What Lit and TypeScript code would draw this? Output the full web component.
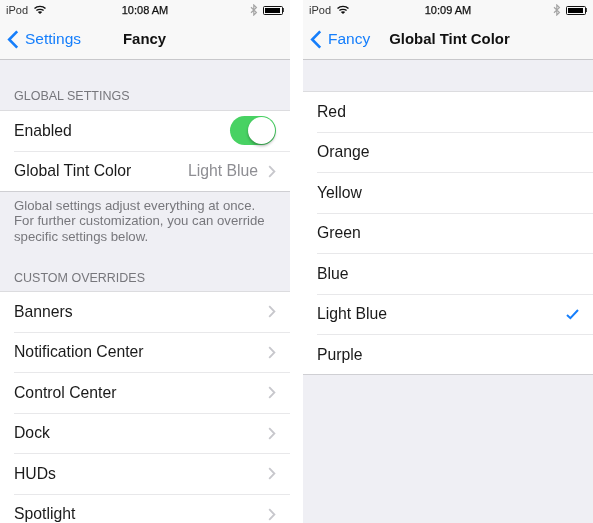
import { LitElement, html, css, svg } from "lit";
import { customElement } from "lit/decorators.js";

const chevron = html`<svg class="chev" width="8" height="13" viewBox="0 0 8 13"><path d="M1.2 1.2 L6.4 6.5 L1.2 11.8" fill="none" stroke="#c7c7cc" stroke-width="1.8"/></svg>`;
const wifi = svg`<path d="M0.5 3.6 C3.4 0.6 8.6 0.6 11.5 3.6 M2.4 5.6 C4.2 3.9 7.8 3.9 9.6 5.6" fill="none" stroke="#111" stroke-width="1.4"/><path d="M6 9 L3.8 6.9 C5 5.9 7 5.9 8.2 6.9 Z" fill="#111"/>`;

function statusBar(time: string) {
  return html`<div class="status">
    <div class="st-left">iPod<svg width="12" height="9" viewBox="0 0 12 9">${wifi}</svg></div>
    <div class="st-time">${time}</div>
    <div class="st-right">
      <svg width="8" height="12" viewBox="0 0 8 12"><path d="M1 3.2 L6.4 8.4 L3.8 11 V1 L6.4 3.6 L1 8.8" fill="none" stroke="#a4a4a4" stroke-width="1.2"/></svg>
      <div class="batt"><div class="batt-fill"></div></div><div class="batt-tip"></div>
    </div>
  </div>`;
}

function navBar(back: string, title: string, cls: string) {
  return html`<div class="nav ${cls}">
    <div class="back">
      <svg width="12" height="19" viewBox="0 0 12 19"><path d="M10.2 1.4 L2.2 9.5 L10.2 17.6" fill="none" stroke="#157efb" stroke-width="2.6"/></svg>
      <span>${back}</span>
    </div>
    <div class="title">${title}</div>
  </div>`;
}

@customElement("app-root")
export class AppRoot extends LitElement {
  static styles = css`
    :host {
      display: flex;
      gap: 13px;
      width: 593px;
      height: 523px;
      overflow: hidden;
      background: #fff;
      font-family: "Liberation Sans", Arial, sans-serif;
      color: #111;
    }
    .panel {
      width: 290px;
      height: 523px;
      flex: none;
      background: #efeff4;
      display: flex;
      flex-direction: column;
      overflow: hidden;
      filter: blur(0.35px);
    }
    .head {
      flex: none;
      height: 59px;
      background: #f8f8f8;
      border-bottom: 1px solid #c8c8cb;
    }
    .status {
      height: 19px;
      display: grid;
      grid-template-columns: 1fr auto 1fr;
      align-items: center;
      padding: 0 6px 0 6px;
      font-size: 11px;
      color: #333;
    }
    .st-left { display: flex; align-items: center; gap: 6px; }
    .st-time { -webkit-text-stroke: 0.25px #111; color: #111; }
    .st-right { display: flex; align-items: center; justify-content: flex-end; }
    .st-right svg { margin-right: 5px; }
    .batt {
      width: 20px;
      height: 9px;
      margin-top: 1px;
      box-sizing: border-box;
      border: 1px solid #111;
      border-radius: 1.5px;
      padding: 1px;
    }
    .batt-fill { width: 15px; height: 100%; background: #000; }
    .batt-tip { width: 1.5px; height: 4px; margin-top: 1px; background: #444; }
    .nav {
      height: 40px;
      display: flex;
      align-items: center;
    }
    .back {
      display: flex;
      align-items: center;
      gap: 6px;
      padding-left: 7px;
      color: #157efb;
      font-size: 15.5px;
    }
    .title {
      font-size: 14.9px;
      font-weight: 700;
      color: #111;
    }
    .nav-left .title { margin-left: 42px; }
    .nav-right .title { margin-left: 19px; }
    .sect {
      font-size: 12.5px;
      color: #77777c;
      padding: 0 14px;
      line-height: 14px;
    }
    .g1 { margin-top: 29px; margin-bottom: 7px; }
    .g2 { margin-top: 27px; margin-bottom: 6px; }
    .list {
      background: #fff;
      border-top: 1px solid #dcdcdf;
      border-bottom: 1px solid #cfcfd3;
    }
    .row {
      height: 40.5px;
      box-sizing: border-box;
      margin-left: 14px;
      padding-right: 14px;
      display: flex;
      align-items: center;
      justify-content: space-between;
      font-size: 15.75px;
      border-bottom: 1px solid #e8e8ea;
      color: #1a1a1a;
    }
    .row:last-child { border-bottom: none; height: 39px; }
    .end { display: flex; align-items: center; gap: 10px; color: #8e8e93; }
    .chev { display: block; }
    .foot {
      font-size: 13.2px;
      line-height: 15.5px;
      color: #77777c;
      padding: 6px 14px 0;
    }
    .switch {
      width: 46px;
      height: 29px;
      border-radius: 15px;
      background: #48d263;
      position: relative;
      box-sizing: border-box;
    }
    .knob {
      position: absolute;
      right: 1px;
      top: 1px;
      width: 27px;
      height: 27px;
      border-radius: 50%;
      background: #fff;
      box-shadow: 0 2px 3px rgba(0,0,0,0.3);
    }
    .band { height: 31px; flex: none; }
    .check { display: block; }
  `;

  render() {
    const rowsA = ["Banners", "Notification Center", "Control Center", "Dock", "HUDs", "Spotlight"];
    const colors = ["Red", "Orange", "Yellow", "Green", "Blue", "Light Blue", "Purple"];
    return html`
      <div class="panel">
        <div class="head">${statusBar("10:08 AM")}${navBar("Settings", "Fancy", "nav-left")}</div>
        <div class="sect g1">GLOBAL SETTINGS</div>
        <div class="list">
          <div class="row"><span>Enabled</span><div class="switch"><div class="knob"></div></div></div>
          <div class="row"><span>Global Tint Color</span><div class="end"><span>Light Blue</span>${chevron}</div></div>
        </div>
        <div class="foot">Global settings adjust everything at once.<br />For further customization, you can override<br />specific settings below.</div>
        <div class="sect g2">CUSTOM OVERRIDES</div>
        <div class="list">
          ${rowsA.map((r) => html`<div class="row"><span>${r}</span>${chevron}</div>`)}
        </div>
      </div>
      <div class="panel">
        <div class="head">${statusBar("10:09 AM")}${navBar("Fancy", "Global Tint Color", "nav-right")}</div>
        <div class="band"></div>
        <div class="list">
          ${colors.map(
            (c) => html`<div class="row"><span>${c}</span>${c === "Light Blue"
                ? html`<svg class="check" width="13" height="11" viewBox="0 0 13 11"><path d="M1 6 L4.4 9.2 L12 1" fill="none" stroke="#157efb" stroke-width="2"/></svg>`
                : ""}</div>`
          )}
        </div>
      </div>
    `;
  }
}
